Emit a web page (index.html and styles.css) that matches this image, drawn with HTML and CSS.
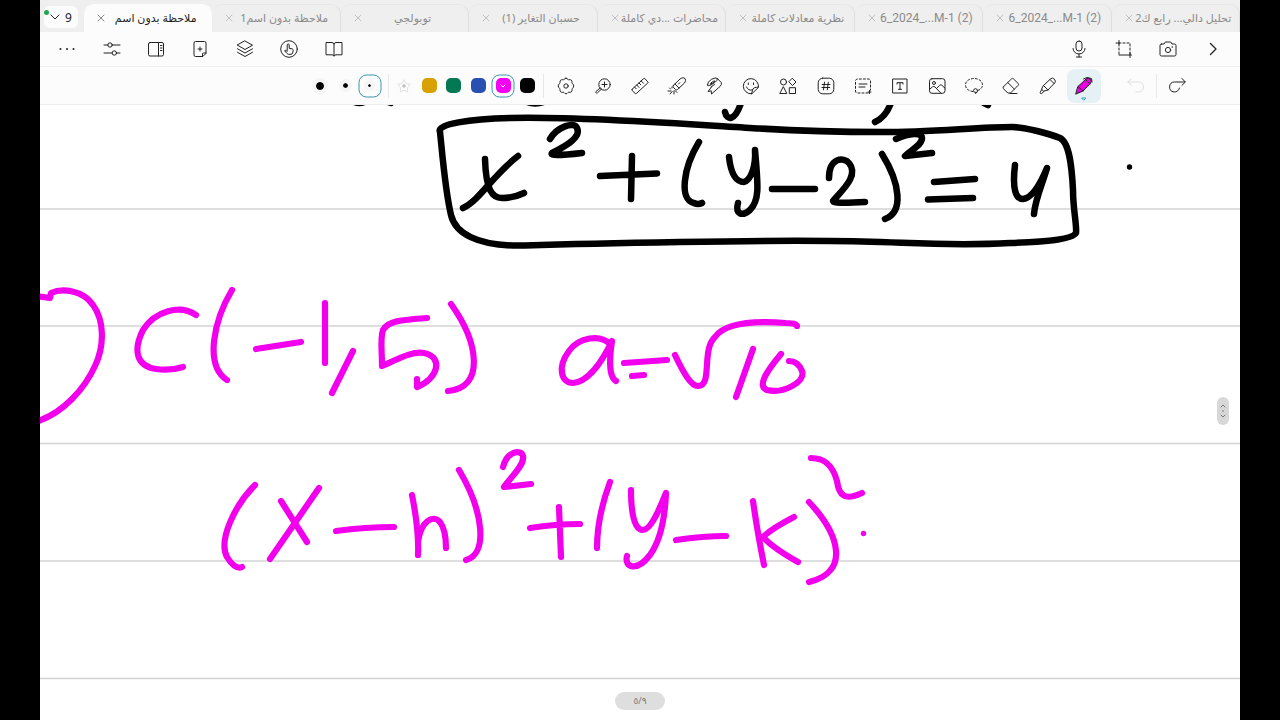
FILE: index.html
```html
<!DOCTYPE html>
<html lang="ar">
<head>
<meta charset="utf-8">
<meta name="viewport" content="width=device-width, initial-scale=1">
<title>ملاحظة بدون اسم</title>
<link rel="stylesheet" href="styles.css">
</head>
<body>
<div class="app">
  <header class="tabbar">
    <button class="tab-count" aria-label="علامات التبويب"><svg class="chevron" viewBox="0 0 10 6"><path d="M1 1l4 4 4-4"/></svg><span>9</span><i class="status"></i></button>
    <ul class="tabs">
      <li class="tab active"><button class="close" aria-label="إغلاق"><svg viewBox="0 0 8 8"><path d="M1 1l6 6M7 1L1 7"/></svg></button><button class="title" dir="rtl">ملاحظة بدون اسم</button></li>
      <li class="tab"><button class="close" aria-label="إغلاق"><svg viewBox="0 0 8 8"><path d="M1 1l6 6M7 1L1 7"/></svg></button><button class="title" dir="rtl">ملاحظة بدون اسم1</button></li>
      <li class="tab"><button class="close" aria-label="إغلاق"><svg viewBox="0 0 8 8"><path d="M1 1l6 6M7 1L1 7"/></svg></button><button class="title" dir="rtl">توبولجي</button></li>
      <li class="tab"><button class="close" aria-label="إغلاق"><svg viewBox="0 0 8 8"><path d="M1 1l6 6M7 1L1 7"/></svg></button><button class="title" dir="rtl">حسبان التغاير (1)</button></li>
      <li class="tab"><button class="close" aria-label="إغلاق"><svg viewBox="0 0 8 8"><path d="M1 1l6 6M7 1L1 7"/></svg></button><button class="title" dir="rtl">محاضرات ...دي كاملة</button></li>
      <li class="tab"><button class="close" aria-label="إغلاق"><svg viewBox="0 0 8 8"><path d="M1 1l6 6M7 1L1 7"/></svg></button><button class="title" dir="rtl">نظرية معادلات كاملة</button></li>
      <li class="tab"><button class="close" aria-label="إغلاق"><svg viewBox="0 0 8 8"><path d="M1 1l6 6M7 1L1 7"/></svg></button><button class="title latin" dir="ltr">6_2024_...M-1 (2)</button></li>
      <li class="tab"><button class="close" aria-label="إغلاق"><svg viewBox="0 0 8 8"><path d="M1 1l6 6M7 1L1 7"/></svg></button><button class="title latin" dir="ltr">6_2024_...M-1 (2)</button></li>
      <li class="tab"><button class="close" aria-label="إغلاق"><svg viewBox="0 0 8 8"><path d="M1 1l6 6M7 1L1 7"/></svg></button><button class="title" dir="rtl">تحليل دالي... رابع ك2</button></li>
    </ul>
  </header>

  <nav class="menubar">
    <div class="menu-left">
      <button aria-label="المزيد"><svg class="icon" viewBox="0 0 20 20"><g class="solid"><circle cx="3.5" cy="10" r="1"/><circle cx="10" cy="10" r="1"/><circle cx="16.5" cy="10" r="1"/></g></svg></button>
      <button aria-label="الإعدادات"><svg class="icon" viewBox="0 0 20 20"><path d="M2 6h4M10.500 6H18M2 14h8M14.500 14H18"/><circle cx="8" cy="6" r="2.200"/><circle cx="12.300" cy="14" r="2.200"/></svg></button>
      <button aria-label="اللوحة الجانبية"><svg class="icon" viewBox="0 0 20 20"><rect x="2.500" y="3.500" width="15" height="13.500" rx="1.500"/><path d="M12.500 3.500V17M14.500 6.500h1.500M14.500 9h1.500M14.500 11.500h1.500"/></svg></button>
      <button aria-label="صفحة جديدة"><svg class="icon" viewBox="0 0 20 20"><path d="M12.500 17.500H5.500a1.500 1.500 0 0 1-1.500-1.500V4a1.500 1.500 0 0 1 1.500-1.500h9A1.500 1.500 0 0 1 16 4v10zM16 14h-2.500a1 1 0 0 0-1 1v2.500M10 8v4M8 10h4"/></svg></button>
      <button aria-label="الطبقات"><svg class="icon" viewBox="0 0 20 20"><path d="M10 2l7.500 4.200L10 10.500 2.500 6.200zM2.500 9.800l7.500 4.200 7.500-4.200M2.500 13.300l7.500 4.200 7.500-4.200"/></svg></button>
      <button aria-label="اللمس"><svg class="icon" viewBox="0 0 20 20"><circle cx="10" cy="10" r="8.300"/><path d="M8.200 11.500V6a1 1 0 0 1 2 0v3.300l3 .6q1.300.4 1 1.800l-.6 2.300q-.3 1.300-1.600 1.300H9.500q-.8 0-1.400-.8L5.600 11.700q.8-1.200 2.600.6"/></svg></button>
      <button aria-label="وضع القراءة"><svg class="icon" viewBox="0 0 20 20"><path d="M10 5Q9.500 3.500 8 3.500H2v12.300h6q1.500 0 2 1.300.5-1.300 2-1.300h6V3.500h-6Q10.500 3.500 10 5v12"/></svg></button>
    </div>
    <div class="menu-right">
      <button aria-label="تسجيل"><svg class="icon" viewBox="0 0 20 20"><rect x="7" y="2" width="6" height="10" rx="3"/><path d="M4 9.500a6 5.500 0 0 0 12 0M10 15v3M7.500 18h5"/></svg></button>
      <button aria-label="قص"><svg class="icon" viewBox="0 0 20 20"><path d="M5 1.500V5M2 4h3M5 16h12.500M16 14v4.500"/><path class="dashed" d="M5 5v11M5 4h11v11"/></svg></button>
      <button aria-label="الكاميرا"><svg class="icon" viewBox="0 0 20 20"><path d="M3.500 5H6l1.300-2h5.400L14 5h2.500Q18 5 18 6.500v9q0 1.500-1.500 1.500h-13Q2 17 2 15.500v-9Q2 5 3.500 5z"/><circle cx="10" cy="11" r="2.600"/><circle class="solid" cx="14.300" cy="8" r=".8"/></svg></button>
      <button aria-label="التالي"><svg class="icon" viewBox="0 0 20 20"><path class="bold" d="M7.500 4.500l5.500 5.500-5.500 5.500"/></svg></button>
    </div>
  </nav>

  <nav class="toolbar">
    <div class="sizes">
      <button aria-label="سميك"><i class="nib nib-large"></i></button>
      <button aria-label="متوسط"><i class="nib nib-medium"></i></button>
      <button class="picked" aria-label="رفيع"><i class="nib nib-small"></i></button>
    </div>
    <i class="divider"></i>
    <div class="colors">
      <button aria-label="إضافة لون"><svg class="icon faint" viewBox="0 0 20 20"><path d="M10 4l2 3.600 4.300.8-3 3.100.5 4.500L10 14.200 6.200 16l.5-4.500-3-3.100L8 7.600z"/><path class="plus" d="M10 8.500v3M8.500 10h3"/></svg></button>
      <button aria-label="ذهبي"><i class="swatch gold"></i></button>
      <button aria-label="أخضر"><i class="swatch green"></i></button>
      <button aria-label="أزرق"><i class="swatch blue"></i></button>
      <button class="picked" aria-label="أرجواني"><i class="swatch magenta"><svg viewBox="0 0 6 4"><path d="M1 1l2 2 2-2"/></svg></i></button>
      <button aria-label="أسود"><i class="swatch black"></i></button>
    </div>
    <i class="divider"></i>
    <div class="tools">
      <button aria-label="إعدادات القلم"><svg class="icon" viewBox="0 0 20 20"><path d="M10 2.200q1.100 0 2 1.300.5.400 1.100.2 1.600-.2 2.300.5t.6 2.300q-.1.600.4 1Q17.800 8.900 17.800 10t-1.400 2.500q-.5.400-.4 1 .1 1.600-.6 2.300t-2.300.5q-.6-.2-1.100.2-.9 1.300-2 1.300t-2-1.300q-.5-.4-1.100-.2-1.600.2-2.300-.5T4 13.500q.1-.6-.4-1Q2.200 11.100 2.200 10t1.400-2.500q.5-.4.400-1-.1-1.600.6-2.300t2.300-.5q.6.200 1.100-.2.900-1.300 2-1.300z"/><circle cx="10" cy="10" r="2.200"/></svg></button>
      <button aria-label="تكبير"><svg class="icon" viewBox="0 0 20 20"><circle cx="11.500" cy="8.500" r="5.700"/><path d="M11.500 6v5M9 8.500h5M7.200 12L3 15.500q-.7 1 .2 1.500.5.500 1.300-.2L8.500 13"/></svg></button>
      <button aria-label="مسطرة"><svg class="icon" viewBox="0 0 20 20"><path d="M2.200 13.200L13.400 2.800q.8-.7 1.600 0l2.700 2.900q.6.700 0 1.400L6.500 17.400q-.7.600-1.400 0l-2.900-2.900q-.6-.6 0-1.300zM4.500 11l1.700 1.800M6.700 9l2.300 2.400M9 7l1.700 1.700M11.200 5l2.300 2.300"/></svg></button>
      <button aria-label="مؤشر ليزر"><svg class="icon" viewBox="0 0 20 20"><path d="M6.300 9.500L13 3q1.500-1.300 3.500-1.200 2.200.4 2 2.500 0 1.700-1.300 3L10.500 13.500q-1 .8-2 0L6.300 11.300q-.7-.9 0-1.800zM8 8l4 4M11.500 8l1.200-1.200M5 12v-1M3.500 13l-1-1M4 15H1M5.200 15.500L3 18M7 15v3M8 14.500l2 2"/></svg></button>
      <button aria-label="شريط"><svg class="icon" viewBox="0 0 20 20"><path d="M3.500 9Q3 6 7.500 3.300 12 1 13.300 2.500q.7 1.500-2.500 4Q6.500 9.700 4.500 9.700 3.700 9.700 3.500 9zM13.300 2.500l4 4Q18 8.500 16 10.500L7.500 18l-.3-3.200L4 15.500 7.500 11M6.500 8q0-1.200 2-2.300 2-1.200 2.500-.6Q10.500 6.700 6.500 8M7 11l3.500-2.500"/></svg></button>
      <button aria-label="ملصقات"><svg class="icon" viewBox="0 0 20 20"><path d="M17.500 11A7.600 7.600 0 1 0 10.500 17.800zM17.500 11q-2 .3-4 .7-2 .8-2 2.800l-1 3.300"/><path d="M5.500 11q1.500 4 6 3M7.300 7v1.500M12.500 7v1.500"/></svg></button>
      <button aria-label="أشكال"><svg class="icon" viewBox="0 0 20 20"><circle cx="5.500" cy="6" r="3"/><path d="M14.500 2.500L18 6l-3.500 3.500L11 6zM5.500 11l3.300 6.500H2.200zM11.700 11.700h5.800v5.800h-5.800z"/></svg></button>
      <button aria-label="شبكة"><svg class="icon" viewBox="0 0 20 20"><rect x="2.200" y="2.200" width="15.600" height="15.600" rx="4.500"/><path d="M8.500 6.200l-1 7.600M12.300 6.200l-1 7.600M6.200 8.500h7.800M5.900 11.500h7.800"/></svg></button>
      <button aria-label="تحديد نص"><svg class="icon" viewBox="0 0 20 20"><path class="dashed" d="M15 17H4.500Q2.500 17 2.500 15V5q0-2 2-2h11q2 0 2 2v9"/><path d="M6 8h8M6 11h6M16.500 14.500v3M15 16h3"/></svg></button>
      <button aria-label="نص"><svg class="icon" viewBox="0 0 20 20"><rect x="3" y="3" width="14" height="14"/><path d="M7 8V6.700h6V8M10 6.700v6.600M8.500 13.300h3"/></svg></button>
      <button aria-label="صورة"><svg class="icon" viewBox="0 0 20 20"><rect x="2.500" y="2.700" width="15.500" height="14.600" rx="2.500"/><circle cx="7" cy="7" r="1.500"/><path d="M2.500 13.500l3-2.700q1.300-1 2.500.2l6 6.200M9.500 12.500l3.300-3.300q1-.9 2 0l3.200 3"/></svg></button>
      <button aria-label="تحديد حر"><svg class="icon" viewBox="0 0 20 20"><path class="dashed" d="M9 15.500C4.500 15 1.500 12.500 1.500 9c0-4 4-6.500 8.500-6.500s8.500 2.500 8.500 6.500c0 2.500-2 4.500-5 5.700"/><path d="M12.500 16.500q-3 .5-3-2 .2-1.800 2-1.800 2.300.2 2 2.300-.2 1.700-2 2.500"/></svg></button>
      <button aria-label="ممحاة"><svg class="icon" viewBox="0 0 20 20"><path d="M2.400 10.800l8.200-8q.9-.8 1.800 0l4.800 4.700q.9.900 0 1.800L9.500 17H6.800l-4.400-4.400q-.9-.9 0-1.800zM6.800 6.600l6.600 6.500M9 17.500h7"/></svg></button>
      <button aria-label="قلم تمييز"><svg class="icon" viewBox="0 0 20 20"><path d="M5.500 9.500L12.800 2.700q1.600-1.400 3.500.4 1.900 2 .5 3.600L10 14l-4.500 1.200-1.700-1.700zM3.800 13.500l-1.600 2.800q-.3 1.500 1.300 1.300l2.500-2.200M5.500 9.500L10 14M12 3.500l4.200 4.200"/></svg></button>
    </div>
    <button class="pen-tool" aria-label="قلم"><svg class="icon" viewBox="0 0 20 20"><path class="pen-fill" d="M4 10.500L12 3q2.200-1.900 4.500.2 1.700 2.100 0 4.300L9 15l-7 3z"/><path d="M4 10.500L9 15M11.500 3.500L16 8M9.500 3l3.500-1.500 4.500 1 .5 3.500"/></svg><svg class="pen-mark" viewBox="0 0 6 4"><path d="M1 1h4L3 3z"/></svg></button>
    <button class="history undo" aria-label="تراجع"><svg class="icon" viewBox="0 0 20 20"><path d="M5 3L1.800 6 5 9M2 6h10.500a5 5 0 0 1 0 10H10"/></svg></button>
    <i class="divider"></i>
    <button class="history" aria-label="إعادة"><svg class="icon" viewBox="0 0 20 20"><path d="M15 2.500L18.300 6 15 9.300M18 6H7.500a5 5 0 1 0 5 6"/></svg></button>
  </nav>

  <main class="page">
    <svg class="ink" viewBox="40 105 1200 615" preserveAspectRatio="xMinYMin meet" role="img" aria-label="x² + (y − 2)² = 4، C(−1, 5)، a = √10، (x − h)² + (y − k)²">
      <path class="rule" d="M40 209H1240M40 326H1240M40 443.500H1240M40 561H1240M40 678.500H1240"/>
      <g class="black-ink">
        <path d="M352 101q8 4 14 0M388 102l3 1M525 101q10 5 21 0M725 112C727 121 735 121 741 103M825 101h6M875 122C884 118 888 111 891 103M984 103l4 2"/>
        <path d="M440 132C436 124 470 119 510 118C580 116 700 125 760 128.500C800 131 850 132 883 132C930 132 980 127 1012 127C1025 127 1050 134 1060 138C1070 143 1072 170 1073 190C1073 210 1077 225 1076 233C1072 240 1040 242 1010 243C940 247 900 241 830 241C760 240 600 243 525 245.500C475 247 455 232 451 215C445 190 442 150 440 132"/>
        <path d="M463 208C480 200 492 176 518 156M485 159C486 190 492 198 502 198Q514 198 524 193"/>
        <path d="M550 139C557 127 574 121 577 128C582 138 562 148 552 153Q548 157 582 153"/>
        <path d="M600 176L657 173.500M632 156L631 199M699 142C683 168 679 200 694 203Q698 205 702 203"/>
        <path d="M729 157C731 175 737 182 744 182C751 180 756 166 755 150C758 185 760 200 750 210C742 217 735 214 738 203"/>
        <path d="M772 189H815M829 178C829 157 844 157 849 163C860 176 840 192 833 201Q832 204 865 202M882 154C900 183 904 212 885 219"/>
        <path d="M896 139C910 133 921 132 922 138C922 145 912 149 905 156L932 153M934 182L975 179M928 199.500L973 198"/>
        <path d="M1015 165C1012 190 1016 199 1023 199C1033 198 1042 180 1047 168C1042 185 1035 200 1034 214"/>
        <circle class="dot" cx="1129.500" cy="167" r="2.700"/>
      </g>
      <g class="pink-ink">
        <path d="M35 296L50 298L51 293C62 288 83 290 93 305C104 320 105 345 95 366C85 388 63 414 35 422"/>
        <path d="M196 315C180 304 155 311 143 330C133 350 136 366 156 369Q170 371 183 367M232 290C214 320 204 365 227 380M256 349L301 342M325 303V363M353 351L332 393"/>
        <path d="M427 318C400 320 388 321 383 330C380 338 382 350 382 366C398 359 412 351 424 353C444 357 438 379 417 387L417 379M451 304C479 343 485 388 448 391"/>
        <path d="M610 344C600 334 579 337 569 351C557 367 561 383 573 383C588 382 602 362 612 341C609 360 609 377 616 381M624 363L667 360M632 376L644 375"/>
        <path d="M675 355C683 372 691 386 698 386C713 386 701 350 715 337C726 321 760 321 786 323Q797 323 797 326M753 349L736 397M781 354C766 372 757 386 767 390C783 394 806 382 802 371Q798 361 789 361"/>
        <path d="M255 485C235 505 218 540 227 557Q235 570 242 567M281 501L307 542M319 488L270 559M336 531Q365 527 394 527"/>
        <path d="M412 495C416 515 419 535 418 555M418 542C421 521 433 514 440 522Q446 530 446 548M459 470C484 512 488 554 466 560"/>
        <path d="M503 467C507 451 521 449 523 456C525 465 510 478 504 487L531 484M530 528Q555 524 580 524M559 507L561 557M610 482Q597 517 597 548"/>
        <path d="M631 490C631 519 636 530 643 530C651 530 660 508 666 493C665 517 660 541 650 555C637 572 624 568 627 556M676 540Q703 536 726 536"/>
        <path d="M753 501Q757 530 764 565M794 517Q771 529 763 537Q773 548 798 562M809 502C840 535 850 572 809 582M811 458C828 458 834 470 837 481C839 496 845 501 862 493"/>
        <circle class="dot" cx="863.500" cy="533.500" r="2.700"/>
      </g>
    </svg>
    <button class="scroll-handle" aria-label="تمرير"><svg viewBox="0 0 8 18"><path d="M2 5l2-2 2 2M2 13l2 2 2-2"/><path d="M4 8.500v1"/></svg></button>
    <span class="page-number">٥/٩</span>
  </main>
</div>
</body>
</html>
```
FILE: styles.css
```css
* { box-sizing: border-box; }

body {
  margin: 0;
  background: #000;
  font-family: "Noto Sans", "DejaVu Sans", sans-serif;
  color: #222;
}

button {
  padding: 0;
  border: 0;
  background: none;
  color: inherit;
  font: inherit;
  display: flex;
  align-items: center;
  justify-content: center;
}

svg {
  display: block;
  fill: none;
  stroke: currentColor;
  stroke-linecap: round;
  stroke-linejoin: round;
}

.app {
  min-height: 100vh;
  margin: 0 40px;
  display: flex;
  flex-direction: column;
  background: #fff;
}

/* Document tabs */
.tabbar {
  display: flex;
  height: 32px;
  background: #efefef;
}

.tab-count {
  position: relative;
  width: 34px;
  height: 22px;
  margin: 6px 6px 0 4px;
  gap: 5px;
  border-radius: 6px;
  background: #fcfcfc;
  font-size: 12px;
}

.chevron { width: 10px; height: 6px; }

.status {
  position: absolute;
  top: 4px;
  left: 0;
  width: 5px;
  height: 5px;
  border-radius: 50%;
  background: #21a656;
}

.tabs {
  flex: 1;
  display: flex;
  margin: 0;
  padding: 4px 0 0;
  list-style: none;
}

.tab {
  flex: 1 1 0;
  min-width: 0;
  display: flex;
  padding-bottom: 2px;
  border-radius: 10px 10px 0 0;
  border-top: 1px solid #e7e7e7;
  border-right: 1px solid #dedede;
  color: #8a8a8a;
}

.tab.active {
  background: #fcfcfc;
  border-color: #fcfcfc;
  color: #222;
}

.close { width: 28px; padding-left: 6px; color: #c0c0c0; }
.close svg { width: 8px; height: 8px; }
.active .close { color: #888; }

.title {
  flex: 1;
  min-width: 0;
  padding-right: 12px;
  font-size: 11px;
  white-space: nowrap;
}

.title.latin { font-family: Roboto, "Noto Sans", sans-serif; font-size: 12px; }

/* Document menu */
.menubar {
  display: flex;
  justify-content: space-between;
  height: 35px;
  padding: 0 5px;
  background: #fcfcfc;
  border-bottom: 1px solid #eee;
}

.menu-left, .menu-right, .sizes, .colors, .tools { display: flex; }
.menu-left { width: 311px; }
.menu-right { width: 178px; }
.menu-left button, .menu-right button, .sizes button, .colors button, .tools button { flex: 1; }

.icon { width: 20px; height: 20px; }
.solid { fill: currentColor; stroke: none; }
.bold { stroke-width: 1.3; }
.dashed { stroke-dasharray: 2 2; }

/* Drawing tools */
.toolbar {
  display: flex;
  align-items: center;
  justify-content: flex-end;
  height: 38px;
  padding-right: 46px;
  background: #fcfcfc;
  border-bottom: 1px solid #eee;
}

.divider { width: 1px; height: 24px; margin: 0 3px; background: #e8e8e8; }
.sizes { width: 74px; margin-right: 3px; }
.colors { width: 148px; }
.tools { width: 520px; }

.picked { position: relative; }
.picked::after {
  content: "";
  position: absolute;
  inset: 50% auto auto 50%;
  width: 21px;
  height: 21px;
  transform: translate(-50%, -50%);
  border: 1px solid #3a94ad;
  border-radius: 8px;
}

.nib { border-radius: 50%; background: #000; outline: 4px solid #f5f5f5; }
.nib-large { width: 8px; height: 8px; }
.nib-medium { width: 5px; height: 5px; }
.nib-small { width: 3px; height: 3px; }

.swatch {
  width: 15px;
  height: 15px;
  border-radius: 5px;
  display: flex;
  align-items: center;
  justify-content: center;
  color: #fff;
}
.swatch svg { width: 6px; height: 4px; }
.gold { background: #d8a000; }
.green { background: #047852; }
.blue { background: #2850b0; }
.magenta { background: #f400f4; }
.black { background: #000; }

.faint { color: #e2e2e2; }
.plus { stroke: #aaa; }

.pen-tool {
  position: relative;
  width: 34px;
  height: 34px;
  border-radius: 8px;
  background: #e5f1f4;
}
.pen-fill { fill: #e800e0; }
.pen-mark {
  position: absolute;
  bottom: 2px;
  width: 6px;
  height: 4px;
  color: #38a3b5;
}

.history { width: 34px; height: 34px; }
.undo { margin-left: 18px; color: #dedede; }

/* Ruled page */
.page {
  position: relative;
  flex: 1;
  overflow: hidden;
}

.ink { width: 100%; }
.rule { stroke: #d3d3d3; stroke-width: 1.5; }
.black-ink { stroke: #000; stroke-width: 6.5; }
.pink-ink { stroke: #f200ee; stroke-width: 6.2; }
.black-ink .dot { fill: #000; stroke: none; }
.pink-ink .dot { fill: #f200ee; stroke: none; }

.scroll-handle {
  position: absolute;
  right: 11px;
  top: 50%;
  width: 12px;
  height: 28px;
  margin-top: -16px;
  border-radius: 6px;
  background: #d8d8d8;
  color: #777;
}
.scroll-handle svg { width: 8px; height: 18px; }

.page-number {
  position: absolute;
  bottom: 10px;
  left: 50%;
  width: 50px;
  margin-left: -25px;
  border-radius: 9px;
  background: #dedede;
  color: #777;
  font-size: 9px;
  line-height: 18px;
  text-align: center;
}
```
